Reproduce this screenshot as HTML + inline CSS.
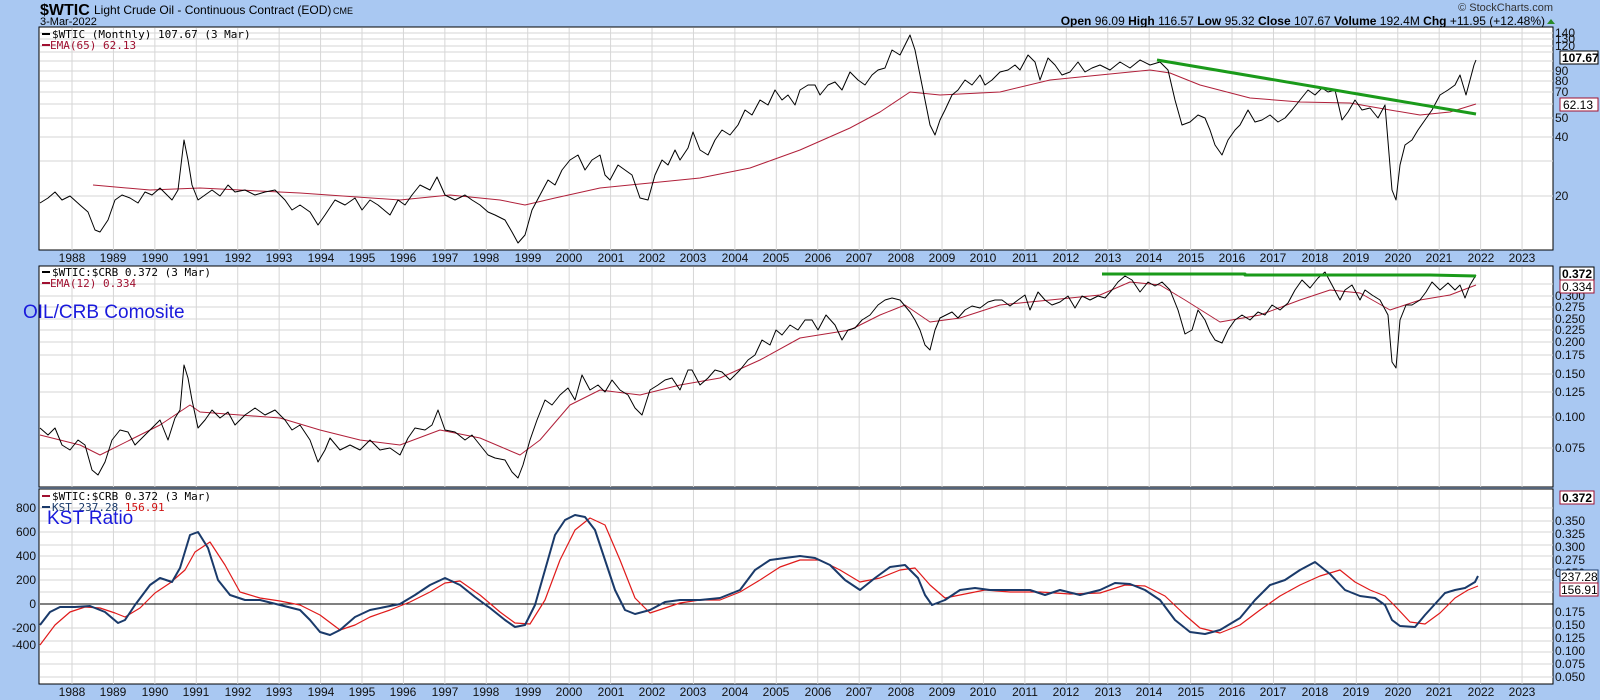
<!DOCTYPE html>
<html><head><meta charset="utf-8"><style>
body{margin:0;width:1600px;height:700px;overflow:hidden;background:#a9c8f2;font-family:"Liberation Sans",sans-serif}
svg{position:absolute;left:0;top:0}
text{font-family:"Liberation Sans",sans-serif}
.m{font-family:"DejaVu Sans Mono","Liberation Mono",monospace;font-size:11px}
.ax{font-size:12px;fill:#111}
</style></head><body>
<svg id="s" width="1600" height="700" viewBox="0 0 1600 700">
<rect x="0" y="0" width="1600" height="700" fill="#a9c8f2"/>
<rect x="39" y="27" width="1514" height="223" fill="#fff" stroke="#000"/>
<rect x="39" y="266" width="1514" height="221" fill="#fff" stroke="#000"/>
<rect x="39" y="489" width="1514" height="195" fill="#fff" stroke="#000"/>
<g id="grid" stroke="#d6d6d6" stroke-width="1"></g>
<text x="40" y="15" font-size="16" font-weight="bold">$WTIC</text>
<text x="94" y="14" font-size="12">Light Crude Oil - Continuous Contract (EOD)</text>
<text x="333" y="14" font-size="9">CME</text>
<text x="40" y="25" font-size="11">3-Mar-2022</text>
<text x="1553" y="11" font-size="11" text-anchor="end" fill="#333">© StockCharts.com</text>
<text x="1545" y="25" font-size="12" text-anchor="end"><tspan font-weight="bold">Open</tspan> 96.09 <tspan font-weight="bold">High</tspan> 116.57 <tspan font-weight="bold">Low</tspan> 95.32 <tspan font-weight="bold">Close</tspan> 107.67 <tspan font-weight="bold">Volume</tspan> 192.4M <tspan font-weight="bold">Chg</tspan> +11.95 (+12.48%)</text>
<path d="M1547 24l4-5 4 5z" fill="#2a8a2a"/>
<g id="lines"></g>
<rect x="42" y="33" width="8" height="2" fill="#000"/><text class="m" x="52" y="38">$WTIC (Monthly) 107.67 (3 Mar)</text>
<rect x="42" y="44" width="8" height="2" fill="#a01030"/><text class="m" x="50" y="49" fill="#a01030">EMA(65) 62.13</text>
<rect x="42" y="271" width="8" height="2" fill="#000"/><text class="m" x="52" y="276">$WTIC:$CRB 0.372 (3 Mar)</text>
<rect x="42" y="282" width="8" height="2" fill="#a01030"/><text class="m" x="50" y="287" fill="#a01030">EMA(12) 0.334</text>
<text x="23" y="318" font-size="19" fill="#1a1adc">OIL/CRB Comosite</text>
<rect x="42" y="495" width="8" height="2" fill="#a01030"/><text class="m" x="52" y="500">$WTIC:$CRB 0.372 (3 Mar)</text>
<rect x="42" y="506" width="8" height="2" fill="#1a3a6a"/><text class="m" x="52" y="511" fill="#1a3a6a">KST 237.28 <tspan fill="#d01010">156.91</tspan></text>
<text x="47" y="524" font-size="19" fill="#1a1adc">KST Ratio</text>
<g class="ax" id="labels">
<text x="1555" y="37">140</text><text x="1555" y="43">130</text><text x="1555" y="50">120</text><text x="1555" y="75">90</text><text x="1555" y="85">80</text><text x="1555" y="96">70</text><text x="1555" y="122">50</text><text x="1555" y="141">40</text><text x="1555" y="200">20</text>
<text x="1555" y="300">0.300</text><text x="1555" y="311">0.275</text><text x="1555" y="323">0.250</text><text x="1555" y="334">0.225</text><text x="1555" y="346">0.200</text><text x="1555" y="359">0.175</text><text x="1555" y="378">0.150</text><text x="1555" y="396">0.125</text><text x="1555" y="421">0.100</text><text x="1555" y="452">0.075</text>
<text x="1555" y="525">0.350</text><text x="1555" y="538">0.325</text><text x="1555" y="551">0.300</text><text x="1555" y="564">0.275</text><text x="1555" y="577">0.250</text><text x="1555" y="616">0.175</text><text x="1555" y="629">0.150</text><text x="1555" y="642">0.125</text><text x="1555" y="655">0.100</text><text x="1555" y="668">0.075</text><text x="1555" y="681">0.050</text>
<text x="36" y="512" text-anchor="end">800</text><text x="36" y="536" text-anchor="end">600</text><text x="36" y="560" text-anchor="end">400</text><text x="36" y="584" text-anchor="end">200</text><text x="36" y="608" text-anchor="end">0</text><text x="36" y="632" text-anchor="end">-200</text><text x="36" y="649" text-anchor="end">-400</text>
</g>
<g id="yrs" class="ax" text-anchor="middle">
<text x="72" y="262">1988</text><text x="113" y="262">1989</text><text x="155" y="262">1990</text><text x="196" y="262">1991</text><text x="238" y="262">1992</text><text x="279" y="262">1993</text><text x="321" y="262">1994</text><text x="362" y="262">1995</text><text x="403" y="262">1996</text><text x="445" y="262">1997</text><text x="486" y="262">1998</text><text x="528" y="262">1999</text><text x="569" y="262">2000</text><text x="611" y="262">2001</text><text x="652" y="262">2002</text><text x="693" y="262">2003</text><text x="735" y="262">2004</text><text x="776" y="262">2005</text><text x="818" y="262">2006</text><text x="859" y="262">2007</text><text x="901" y="262">2008</text><text x="942" y="262">2009</text><text x="983" y="262">2010</text><text x="1025" y="262">2011</text><text x="1066" y="262">2012</text><text x="1108" y="262">2013</text><text x="1149" y="262">2014</text><text x="1191" y="262">2015</text><text x="1232" y="262">2016</text><text x="1273" y="262">2017</text><text x="1315" y="262">2018</text><text x="1356" y="262">2019</text><text x="1398" y="262">2020</text><text x="1439" y="262">2021</text><text x="1481" y="262">2022</text><text x="1522" y="262">2023</text>
</g>
<g id="yrs2" class="ax" text-anchor="middle"></g>
<g font-size="12" font-weight="bold">
<rect x="1560" y="51" width="38" height="13" fill="#fff" stroke="#000"/><text x="1562" y="62">107.67</text>
<rect x="1560" y="98" width="38" height="13" fill="#fff" stroke="#a01030"/><text x="1563" y="109" font-weight="normal">62.13</text>
<rect x="1560" y="267" width="34" height="13" fill="#fff" stroke="#000"/><text x="1562" y="278">0.372</text>
<rect x="1560" y="280" width="34" height="13" fill="#fff" stroke="#a01030"/><text x="1562" y="291" font-weight="normal">0.334</text>
<rect x="1560" y="491" width="34" height="13" fill="#fff" stroke="#a01030"/><text x="1562" y="502">0.372</text>
<rect x="1560" y="570" width="38" height="13" fill="#fff" stroke="#1a3a6a"/><text x="1561" y="581" font-weight="normal">237.28</text>
<rect x="1560" y="583" width="38" height="13" fill="#fff" stroke="#a01030"/><text x="1561" y="594" font-weight="normal">156.91</text>
</g>
</svg>
<script>
var NS="http://www.w3.org/2000/svg";
function el(p,t,a){var e=document.createElementNS(NS,t);for(var k in a)e.setAttribute(k,a[k]);p.appendChild(e);return e;}
var g=document.getElementById('grid');
for(var i=0;i<36;i++){var x=72+i*41.43;
 el(g,'line',{x1:x,y1:28,x2:x,y2:250});el(g,'line',{x1:x,y1:267,x2:x,y2:487});el(g,'line',{x1:x,y1:490,x2:x,y2:684});}
[33,39,46,52,61,71,81,92,104,118,137,161,196].forEach(function(y){el(g,'line',{x1:40,y1:y,x2:1553,y2:y});});
[284,296,307,319,330,342,355,374,392,417,448].forEach(function(y){el(g,'line',{x1:40,y1:y,x2:1553,y2:y});});
[508,521,532,545,556,569,580,592,628,641,652,664,677].forEach(function(y){el(g,'line',{x1:40,y1:y,x2:1553,y2:y});});
var y2=document.getElementById('yrs2');
document.querySelectorAll('#yrs text').forEach(function(t){var c=t.cloneNode(true);c.setAttribute('y','696');y2.appendChild(c);});
var L=document.getElementById('lines');
function pl(pts,col,w){el(L,'polyline',{points:pts,fill:'none',stroke:col,'stroke-width':w,'stroke-linejoin':'round'});}
pl("93,185 150,190 200,188 300,193 400,200 450,195 500,200 525,205 555,198 600,188 640,184 700,178 750,168 800,150 850,128 880,112 910,92 940,95 1000,92 1050,80 1100,75 1150,70 1170,73 1200,85 1250,98 1300,102 1350,103 1390,110 1420,115 1450,112 1476,104","#b0203a",1);
pl("40,203 48,198 55,192 62,200 70,196 80,205 88,212 95,230 100,232 108,220 115,200 122,195 130,198 138,203 145,192 152,195 160,188 165,193 172,200 178,190 184,140 188,160 192,185 198,200 205,195 212,190 220,196 228,185 235,192 245,190 255,195 265,192 275,190 285,200 292,210 300,205 310,212 318,225 325,215 335,200 345,205 355,198 362,210 370,200 378,205 390,215 398,200 405,205 412,195 420,185 430,190 437,177 445,195 455,200 465,195 472,200 480,205 488,212 495,215 505,220 512,232 518,243 525,235 532,210 540,195 548,180 555,185 562,170 570,160 578,155 585,170 592,160 600,155 605,175 610,180 618,165 625,170 632,175 640,198 648,200 655,175 662,160 668,165 675,150 680,160 688,148 693,132 700,150 708,155 715,140 722,130 730,135 738,125 745,110 752,115 760,100 768,105 775,90 782,100 788,95 795,105 800,90 808,85 815,85 820,95 828,85 835,82 842,90 850,72 858,80 865,85 872,75 878,70 885,68 892,50 900,55 905,45 910,35 915,50 920,75 925,100 930,125 935,135 940,120 945,110 952,95 958,90 965,80 972,85 980,75 985,85 992,80 1000,72 1008,70 1015,65 1020,70 1028,55 1035,62 1040,80 1048,58 1055,65 1062,75 1070,72 1078,62 1085,72 1092,68 1100,65 1110,70 1120,62 1130,68 1140,60 1150,65 1160,62 1168,70 1175,100 1182,125 1190,122 1198,115 1205,118 1210,130 1215,145 1222,155 1228,140 1235,130 1240,125 1248,110 1255,122 1262,120 1270,115 1278,122 1285,118 1292,110 1300,100 1308,90 1315,95 1322,88 1328,92 1335,90 1342,120 1348,112 1355,100 1362,110 1370,108 1378,118 1385,105 1392,190 1396,200 1400,165 1405,145 1412,140 1418,130 1425,120 1432,110 1440,95 1448,90 1455,85 1460,75 1466,95 1470,80 1474,65 1476,60","#000",1);
pl("1157,60 1476,114","#1a9a1a",3);
pl("40,435 80,445 100,455 130,440 160,425 190,405 200,412 240,415 280,418 320,430 360,440 400,445 440,430 480,438 520,455 540,440 570,405 600,390 640,395 680,385 720,378 760,360 800,338 850,330 880,315 905,305 930,322 960,318 1000,305 1050,300 1100,295 1130,282 1160,285 1185,300 1220,322 1260,315 1300,300 1330,290 1360,293 1390,310 1420,300 1450,295 1476,285","#b0203a",1);
pl("40,428 48,435 55,428 62,445 70,450 78,440 85,445 92,470 98,475 105,462 112,440 120,430 128,432 135,445 145,435 152,428 160,420 168,440 175,418 180,410 184,365 188,378 192,400 198,428 205,420 212,410 220,418 228,412 235,425 245,415 255,408 265,415 275,410 285,420 292,430 300,425 310,440 318,462 325,450 330,438 340,450 350,445 360,450 370,440 380,450 390,448 400,455 408,438 415,428 425,430 432,425 438,410 445,430 455,432 465,440 472,435 480,445 488,455 495,458 505,460 512,472 518,478 523,465 530,440 537,420 545,400 552,405 560,395 568,388 575,400 582,375 590,390 598,385 605,392 612,380 620,390 628,395 635,408 642,415 650,390 658,385 665,380 672,378 680,390 688,370 692,370 700,385 708,378 715,370 722,372 730,380 740,370 748,360 755,355 762,340 770,345 776,330 782,335 790,325 798,330 805,320 812,320 818,330 826,315 835,325 842,340 848,330 855,328 862,320 870,315 878,305 885,300 892,298 900,300 905,306 910,312 915,320 920,330 925,345 930,350 935,330 940,318 946,315 952,312 958,318 965,310 972,306 980,308 988,302 995,300 1002,300 1010,306 1018,300 1025,295 1030,310 1038,292 1045,300 1052,305 1060,302 1068,296 1075,308 1082,296 1090,300 1098,296 1105,298 1112,290 1118,282 1125,276 1132,280 1140,292 1148,282 1155,286 1162,282 1170,290 1178,310 1185,334 1192,330 1198,310 1205,320 1210,332 1215,340 1222,343 1228,330 1235,320 1242,315 1250,320 1258,312 1265,315 1272,305 1280,310 1288,303 1295,290 1302,280 1310,288 1318,278 1325,272 1332,285 1340,300 1345,290 1352,285 1360,300 1365,290 1372,295 1380,300 1388,315 1392,362 1396,368 1400,320 1406,305 1412,305 1420,300 1426,292 1432,282 1440,290 1448,283 1455,290 1460,285 1465,298 1470,285 1476,275","#000",1);
pl("1102,274 1245,274 1245,275 1430,275 1476,276","#1a9a1a",3);
el(L,'line',{x1:40,y1:604,x2:1553,y2:604,stroke:'#000','stroke-width':1});
pl("40,645 55,625 70,612 85,607 100,608 115,613 125,617 140,608 155,593 170,583 185,570 195,552 210,542 225,565 240,592 260,598 280,601 300,605 320,615 340,630 355,625 370,617 390,610 410,602 430,592 445,583 460,581 480,595 500,612 515,623 530,624 545,600 560,560 575,530 590,518 605,525 620,560 635,598 650,613 665,608 680,603 700,600 720,600 740,592 760,580 780,567 800,560 820,560 840,570 860,582 880,578 900,570 915,568 930,585 945,598 965,594 985,590 1010,592 1040,592 1070,594 1100,593 1125,585 1145,586 1165,596 1185,615 1200,628 1220,633 1240,625 1260,610 1280,596 1300,585 1320,576 1340,570 1355,582 1370,590 1385,596 1395,606 1410,622 1425,624 1440,613 1455,598 1468,590 1478,586","#e01a1a",1.2);
pl("40,625 50,612 60,607 75,607 90,606 105,612 118,623 125,620 135,605 150,585 160,578 172,582 180,568 190,535 198,532 208,548 218,580 230,595 245,600 260,600 280,605 300,610 310,620 320,632 330,635 340,630 355,617 370,610 385,607 400,604 415,595 430,585 445,578 460,585 475,597 490,608 505,620 515,627 525,625 535,605 545,570 555,535 565,520 575,515 585,517 595,530 605,560 615,590 625,610 635,614 650,610 665,602 680,600 700,600 720,598 740,590 755,570 770,560 785,558 800,556 815,558 830,565 845,580 860,590 875,578 890,567 905,565 918,578 925,595 932,605 945,600 960,590 975,588 990,590 1010,590 1030,590 1045,595 1060,590 1080,595 1100,590 1115,583 1130,584 1145,590 1160,600 1175,620 1190,632 1205,634 1220,630 1240,618 1255,600 1270,585 1285,580 1300,570 1315,562 1330,574 1345,590 1360,596 1375,598 1385,605 1392,620 1400,626 1415,627 1425,615 1435,604 1445,593 1455,590 1465,588 1475,582 1478,576","#1a3a6a",2);
</script>
</body></html>
